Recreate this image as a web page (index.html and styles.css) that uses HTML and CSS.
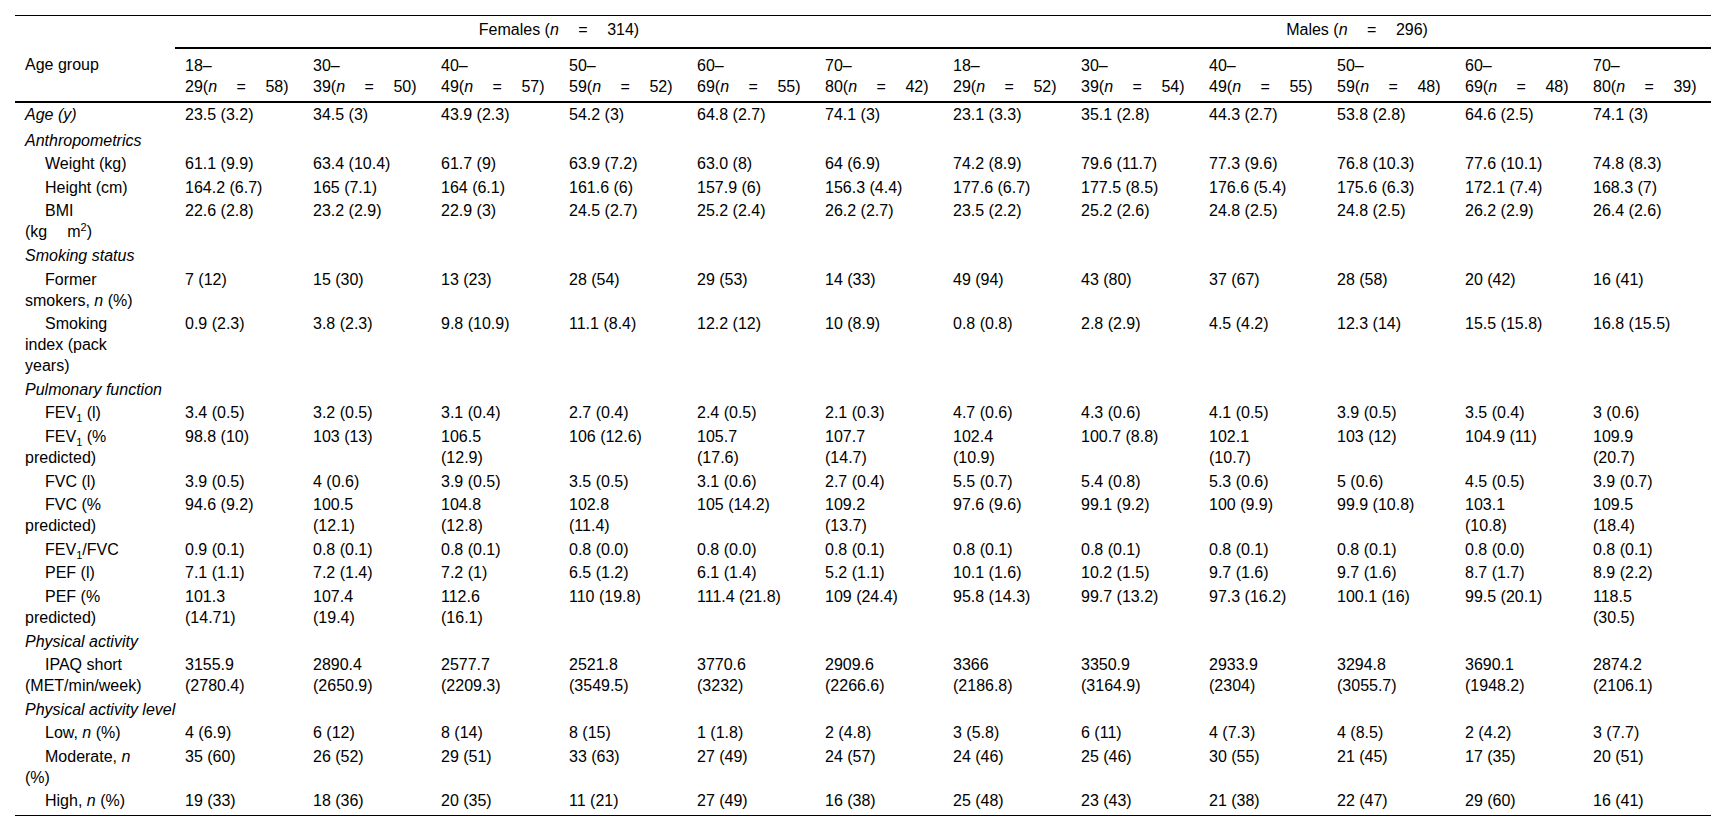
FILE: index.html
```html
<!DOCTYPE html>
<html lang="en">
<head>
<meta charset="utf-8">
<title>Characteristics by age group and sex</title>
<link rel="stylesheet" href="styles.css">
</head>
<body>
<div class="wrap">
<table class="data">
  <colgroup>
    <col class="c-label">
    <col class="c-val"><col class="c-val"><col class="c-val"><col class="c-val"><col class="c-val"><col class="c-val">
    <col class="c-val"><col class="c-val"><col class="c-val"><col class="c-val"><col class="c-val"><col class="c-last">
  </colgroup>
  <thead>
    <tr class="h1">
      <th></th>
      <th colspan="6" class="grp">Females (<i>n</i><span class="eq">=</span>314)</th>
      <th colspan="6" class="grp">Males (<i>n</i><span class="eq">=</span>296)</th>
    </tr>
    <tr class="h2">
      <th>Age group</th>
      <th>18–<br><span class="nw">29(<i>n</i><span class="eq">=</span>58)</span></th>
      <th>30–<br><span class="nw">39(<i>n</i><span class="eq">=</span>50)</span></th>
      <th>40–<br><span class="nw">49(<i>n</i><span class="eq">=</span>57)</span></th>
      <th>50–<br><span class="nw">59(<i>n</i><span class="eq">=</span>52)</span></th>
      <th>60–<br><span class="nw">69(<i>n</i><span class="eq">=</span>55)</span></th>
      <th>70–<br><span class="nw">80(<i>n</i><span class="eq">=</span>42)</span></th>
      <th>18–<br><span class="nw">29(<i>n</i><span class="eq">=</span>52)</span></th>
      <th>30–<br><span class="nw">39(<i>n</i><span class="eq">=</span>54)</span></th>
      <th>40–<br><span class="nw">49(<i>n</i><span class="eq">=</span>55)</span></th>
      <th>50–<br><span class="nw">59(<i>n</i><span class="eq">=</span>48)</span></th>
      <th>60–<br><span class="nw">69(<i>n</i><span class="eq">=</span>48)</span></th>
      <th>70–<br><span class="nw">80(<i>n</i><span class="eq">=</span>39)</span></th>
    </tr>
  </thead>
  <tbody>
    <tr class="first">
      <td class="sec">Age (y)</td>
      <td>23.5 (3.2)</td><td>34.5 (3)</td><td>43.9 (2.3)</td><td>54.2 (3)</td><td>64.8 (2.7)</td><td>74.1 (3)</td>
      <td>23.1 (3.3)</td><td>35.1 (2.8)</td><td>44.3 (2.7)</td><td>53.8 (2.8)</td><td>64.6 (2.5)</td><td>74.1 (3)</td>
    </tr>
    <tr><td class="sec" colspan="13">Anthropometrics</td></tr>
    <tr>
      <td class="ind">Weight (kg)</td>
      <td>61.1 (9.9)</td><td>63.4 (10.4)</td><td>61.7 (9)</td><td>63.9 (7.2)</td><td>63.0 (8)</td><td>64 (6.9)</td>
      <td>74.2 (8.9)</td><td>79.6 (11.7)</td><td>77.3 (9.6)</td><td>76.8 (10.3)</td><td>77.6 (10.1)</td><td>74.8 (8.3)</td>
    </tr>
    <tr>
      <td class="ind">Height (cm)</td>
      <td>164.2 (6.7)</td><td>165 (7.1)</td><td>164 (6.1)</td><td>161.6 (6)</td><td>157.9 (6)</td><td>156.3 (4.4)</td>
      <td>177.6 (6.7)</td><td>177.5 (8.5)</td><td>176.6 (5.4)</td><td>175.6 (6.3)</td><td>172.1 (7.4)</td><td>168.3 (7)</td>
    </tr>
    <tr>
      <td class="ind">BMI (kg<span class="sp"></span>m<sup>2</sup>)</td>
      <td>22.6 (2.8)</td><td>23.2 (2.9)</td><td>22.9 (3)</td><td>24.5 (2.7)</td><td>25.2 (2.4)</td><td>26.2 (2.7)</td>
      <td>23.5 (2.2)</td><td>25.2 (2.6)</td><td>24.8 (2.5)</td><td>24.8 (2.5)</td><td>26.2 (2.9)</td><td>26.4 (2.6)</td>
    </tr>
    <tr><td class="sec" colspan="13">Smoking status</td></tr>
    <tr>
      <td class="ind">Former smokers, <i>n</i> (%)</td>
      <td>7 (12)</td><td>15 (30)</td><td>13 (23)</td><td>28 (54)</td><td>29 (53)</td><td>14 (33)</td>
      <td>49 (94)</td><td>43 (80)</td><td>37 (67)</td><td>28 (58)</td><td>20 (42)</td><td>16 (41)</td>
    </tr>
    <tr>
      <td class="ind">Smoking index (pack years)</td>
      <td>0.9 (2.3)</td><td>3.8 (2.3)</td><td>9.8 (10.9)</td><td>11.1 (8.4)</td><td>12.2 (12)</td><td>10 (8.9)</td>
      <td>0.8 (0.8)</td><td>2.8 (2.9)</td><td>4.5 (4.2)</td><td>12.3 (14)</td><td>15.5 (15.8)</td><td>16.8 (15.5)</td>
    </tr>
    <tr><td class="sec" colspan="13">Pulmonary function</td></tr>
    <tr>
      <td class="ind">FEV<sub>1</sub> (l)</td>
      <td>3.4 (0.5)</td><td>3.2 (0.5)</td><td>3.1 (0.4)</td><td>2.7 (0.4)</td><td>2.4 (0.5)</td><td>2.1 (0.3)</td>
      <td>4.7 (0.6)</td><td>4.3 (0.6)</td><td>4.1 (0.5)</td><td>3.9 (0.5)</td><td>3.5 (0.4)</td><td>3 (0.6)</td>
    </tr>
    <tr>
      <td class="ind">FEV<sub>1</sub> (% predicted)</td>
      <td>98.8 (10)</td><td>103 (13)</td><td>106.5 (12.9)</td><td>106 (12.6)</td><td>105.7 (17.6)</td><td>107.7 (14.7)</td>
      <td>102.4 (10.9)</td><td>100.7 (8.8)</td><td>102.1 (10.7)</td><td>103 (12)</td><td>104.9 (11)</td><td>109.9 (20.7)</td>
    </tr>
    <tr>
      <td class="ind">FVC (l)</td>
      <td>3.9 (0.5)</td><td>4 (0.6)</td><td>3.9 (0.5)</td><td>3.5 (0.5)</td><td>3.1 (0.6)</td><td>2.7 (0.4)</td>
      <td>5.5 (0.7)</td><td>5.4 (0.8)</td><td>5.3 (0.6)</td><td>5 (0.6)</td><td>4.5 (0.5)</td><td>3.9 (0.7)</td>
    </tr>
    <tr>
      <td class="ind">FVC (% predicted)</td>
      <td>94.6 (9.2)</td><td>100.5 (12.1)</td><td>104.8 (12.8)</td><td>102.8 (11.4)</td><td>105 (14.2)</td><td>109.2 (13.7)</td>
      <td>97.6 (9.6)</td><td>99.1 (9.2)</td><td>100 (9.9)</td><td>99.9 (10.8)</td><td>103.1 (10.8)</td><td>109.5 (18.4)</td>
    </tr>
    <tr>
      <td class="ind">FEV<sub>1</sub>/FVC</td>
      <td>0.9 (0.1)</td><td>0.8 (0.1)</td><td>0.8 (0.1)</td><td>0.8 (0.0)</td><td>0.8 (0.0)</td><td>0.8 (0.1)</td>
      <td>0.8 (0.1)</td><td>0.8 (0.1)</td><td>0.8 (0.1)</td><td>0.8 (0.1)</td><td>0.8 (0.0)</td><td>0.8 (0.1)</td>
    </tr>
    <tr>
      <td class="ind">PEF (l)</td>
      <td>7.1 (1.1)</td><td>7.2 (1.4)</td><td>7.2 (1)</td><td>6.5 (1.2)</td><td>6.1 (1.4)</td><td>5.2 (1.1)</td>
      <td>10.1 (1.6)</td><td>10.2 (1.5)</td><td>9.7 (1.6)</td><td>9.7 (1.6)</td><td>8.7 (1.7)</td><td>8.9 (2.2)</td>
    </tr>
    <tr>
      <td class="ind">PEF (% predicted)</td>
      <td>101.3 (14.71)</td><td>107.4 (19.4)</td><td>112.6 (16.1)</td><td>110 (19.8)</td><td>111.4 (21.8)</td><td>109 (24.4)</td>
      <td>95.8 (14.3)</td><td>99.7 (13.2)</td><td>97.3 (16.2)</td><td>100.1 (16)</td><td>99.5 (20.1)</td><td>118.5 (30.5)</td>
    </tr>
    <tr><td class="sec" colspan="13">Physical activity</td></tr>
    <tr>
      <td class="ind">IPAQ short (MET/min/week)</td>
      <td>3155.9 (2780.4)</td><td>2890.4 (2650.9)</td><td>2577.7 (2209.3)</td><td>2521.8 (3549.5)</td><td>3770.6 (3232)</td><td>2909.6 (2266.6)</td>
      <td>3366 (2186.8)</td><td>3350.9 (3164.9)</td><td>2933.9 (2304)</td><td>3294.8 (3055.7)</td><td>3690.1 (1948.2)</td><td>2874.2 (2106.1)</td>
    </tr>
    <tr><td class="sec" colspan="13">Physical activity level</td></tr>
    <tr>
      <td class="ind">Low, <i>n</i> (%)</td>
      <td>4 (6.9)</td><td>6 (12)</td><td>8 (14)</td><td>8 (15)</td><td>1 (1.8)</td><td>2 (4.8)</td>
      <td>3 (5.8)</td><td>6 (11)</td><td>4 (7.3)</td><td>4 (8.5)</td><td>2 (4.2)</td><td>3 (7.7)</td>
    </tr>
    <tr>
      <td class="ind">Moderate, <i>n</i> (%)</td>
      <td>35 (60)</td><td>26 (52)</td><td>29 (51)</td><td>33 (63)</td><td>27 (49)</td><td>24 (57)</td>
      <td>24 (46)</td><td>25 (46)</td><td>30 (55)</td><td>21 (45)</td><td>17 (35)</td><td>20 (51)</td>
    </tr>
    <tr class="last">
      <td class="ind">High, <i>n</i> (%)</td>
      <td>19 (33)</td><td>18 (36)</td><td>20 (35)</td><td>11 (21)</td><td>27 (49)</td><td>16 (38)</td>
      <td>25 (48)</td><td>23 (43)</td><td>21 (38)</td><td>22 (47)</td><td>29 (60)</td><td>16 (41)</td>
    </tr>
  </tbody>
</table>
</div>
</body>
</html>
```

FILE: styles.css
```css
html, body {
  margin: 0;
  padding: 0;
  background: #fff;
  overflow: hidden;
}

.wrap {
  padding: 15px 0 0 15px;
}

.data {
  border-collapse: collapse;
  table-layout: fixed;
  width: 1756px;
  font-family: "Liberation Sans", Arial, sans-serif;
  font-size: 16px;
  line-height: 21px;
  color: #000;
  border-top: 1px solid #000;
  border-bottom: 1px solid #000;
}

.c-label { width: 160px; }
.c-val { width: 128px; }
.c-last { width: 188px; }

.data th,
.data td {
  box-sizing: border-box;
  text-align: left;
  vertical-align: top;
  font-weight: normal;
  padding: 1px 34px 1.6px 10px;
}

.data tr > *:last-child {
  padding-right: 94px;
}

.data thead tr.h1 th {
  padding-top: 3px;
  padding-bottom: 7px;
}

.data thead tr.h2 th {
  padding-top: 6px;
  padding-bottom: 4px;
  border-bottom: 2px solid #000;
}

.data thead tr.h1 th.grp {
  text-align: center;
  padding-left: 0;
  padding-right: 0;
  border-bottom: 2px solid #000;
}

.data tbody tr.first td {
  padding-bottom: 3.6px;
}

.data tbody tr.last td {
  padding-bottom: 4px;
}

.nw { white-space: nowrap; }

.eq { padding: 0 19.5px; }

.sp { padding-left: 20px; }

.data td.sec {
  font-style: italic;
  white-space: nowrap;
}

.data td.ind {
  text-indent: 20px;
}

sub, sup {
  font-size: 11px;
  line-height: 0;
}
```
